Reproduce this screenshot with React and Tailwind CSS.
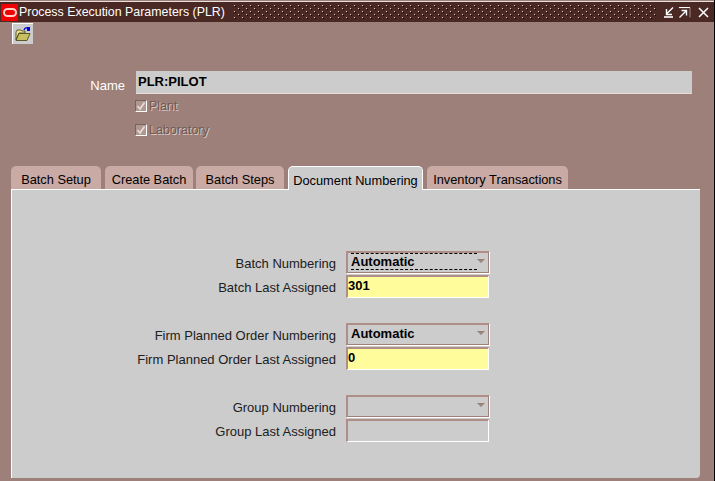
const font = { fontFamily: '"Liberation Sans", Arial, sans-serif' };

function OracleLogo() {
  return (
    <div className="flex h-[17px] w-[17px] items-center justify-center bg-[#f00000]">
      <div className="h-[9px] w-[14px] rounded-[5px] border-2 border-[#ffd0c8]" />
    </div>
  );
}

function TitleDots() {
  return (
    <svg className="h-[14px] flex-1" aria-hidden="true">
      <defs>
        <pattern id="dots" width="8" height="6" patternUnits="userSpaceOnUse">
          <rect x="1" y="0" width="1" height="1" fill="#e8c8c0" />
          <rect x="2" y="1" width="1" height="1" fill="#000000" />
          <rect x="5" y="3" width="1" height="1" fill="#e8c8c0" />
          <rect x="6" y="4" width="1" height="1" fill="#000000" />
        </pattern>
      </defs>
      <rect width="100%" height="100%" fill="url(#dots)" />
    </svg>
  );
}

function WindowButtons() {
  return (
    <div className="ml-[7px] flex items-center gap-[5px]">
      <svg width="10" height="11" viewBox="0 0 10 11" fill="none" stroke="#ffffff">
        <path d="M9 0.5 L3 6.5 M2.5 2 V7.5 H8" strokeWidth="1.4" />
        <path d="M0 10 H9" strokeWidth="1.6" />
      </svg>
      <svg width="12" height="11" viewBox="0 0 12 11" fill="none" stroke="#ffffff">
        <path d="M0 0.5 H11" strokeWidth="1.2" />
        <path d="M11 0.5 V10.5" strokeWidth="1" stroke="#a08880" />
        <path d="M0.5 10.5 L7 4 M2.5 3.5 H7.5 V8.5" strokeWidth="1.4" />
      </svg>
      <svg width="11" height="11" viewBox="0 0 11 11" fill="none" stroke="#ffffff" className="ml-[2px]">
        <path d="M1 1 L10 10 M10 1 L1 10" strokeWidth="1.5" />
      </svg>
    </div>
  );
}

function OpenIcon() {
  return (
    <svg width="16" height="16" viewBox="0 0 16 16">
      <path d="M9 4 C10 1.5 12 1.5 13 2.5" fill="none" stroke="#0000e0" strokeWidth="1.2" />
      <path d="M12 1 H15 V5 H12 Z" fill="#0000e0" />
      <path d="M1 6 L2 4 H6 L7 5 H10 V7 H4 L1 14 Z" fill="#e8e090" stroke="#403c10" strokeWidth="0.8" />
      <path d="M1 14.5 L4 7.5 H15 L12 14.5 Z" fill="#c8c060" stroke="#403c10" strokeWidth="0.8" />
    </svg>
  );
}

function Checkbox({ label }) {
  return (
    <div className="flex h-[24px] items-center">
      <div className="flex h-[12px] w-[12px] items-center justify-center border-t border-l border-[#7a625c] border-r-white border-b-white [border-right-style:solid] [border-bottom-style:solid] border-r border-b bg-[#b09890]">
        <svg width="10" height="10" viewBox="0 0 10 10" fill="none" stroke="#e8dcd8" strokeWidth="1.8">
          <path d="M1.5 5 L4 8 L8.5 1.5" />
        </svg>
      </div>
      <span className="ml-[2px] text-[12.5px] text-[#6f5a54] [text-shadow:1px_1px_0_#d8c8c4]">{label}</span>
    </div>
  );
}

function Tab({ label, active, width }) {
  if (active) {
    return (
      <div className={"relative z-10 mb-[-1px] flex h-[24px] items-center justify-center rounded-t-[5px] border-x border-t border-white bg-[#cccccc] pt-[4px] text-[12.8px] text-black " + width}>
        {label}
      </div>
    );
  }
  return (
    <div className={"flex h-[23px] items-center justify-center rounded-t-[5px] bg-[#c9aaa4] pt-[4px] text-[12.8px] text-black " + width}>
      {label}
    </div>
  );
}

function Select({ value, focused }) {
  return (
    <div className="flex h-[22px] w-[143px] items-center border-t-2 border-l-2 border-r border-b border-t-[#b08e88] border-l-[#b08e88] border-r-[#9c8079] border-b-[#9c8079] bg-[#cccccc] pr-[3px] pb-[3px] pl-[3px] shadow-[1px_1px_0_#ffffff]">
      <span className={"flex-1 text-[13px] leading-[15px] font-bold text-black " + (focused ? "border-y border-dashed border-black" : "")}>
        {value}
      </span>
      <div className="h-0 w-0 border-x-4 border-t-[4px] border-x-transparent border-t-[#9c8079]" />
    </div>
  );
}

function TextField({ value, disabled }) {
  return (
    <div
      className={
        "flex h-[23px] w-[143px] items-center border-t-2 border-l-2 border-r border-b border-t-[#b08e88] border-l-[#b08e88] border-r-white border-b-white pb-[2px] text-[13px] font-bold text-black " +
        (disabled ? "bg-[#cccccc]" : "bg-[#fffc9c]")
      }
    >
      {value}
    </div>
  );
}

function Row({ label, children }) {
  return (
    <div className="flex h-[24px] items-center">
      <div className="w-[324px] pt-[4px] text-right text-[13px] text-[#202020]">{label}</div>
      <div className="ml-[10px]">{children}</div>
    </div>
  );
}

export default function App() {
  return (
    <div style={font} className="flex h-[481px] w-[715px] flex-col overflow-hidden border-r border-black bg-[#9c8079] pt-[1px]">
      <div className="h-[1px] bg-[#e8e0dc]" />
      {/* barra de titulo */}
      <div className="flex h-[20px] items-center bg-[#4a2823] pr-[5px] pl-[1px]">
        <OracleLogo />
        <span className="ml-[1px] text-[12.4px] whitespace-nowrap text-white">Process Execution Parameters (PLR)</span>
        <div className="ml-[8px] flex flex-1 items-center">
          <TitleDots />
          <WindowButtons />
        </div>
      </div>

      <div className="pt-[1px] pl-[12px]">
        <div className="flex h-[21px] w-[21px] items-center justify-center border-t border-l border-white bg-[#cccccc]">
          <OpenIcon />
        </div>
      </div>

      <div className="mt-[27px] flex h-[23px] items-center">
        <div className="w-[125px] pt-[6px] text-right text-[13px] text-white">Name</div>
        <div className="ml-[11px] flex h-[23px] w-[556px] items-center border-r border-b border-r-[#d8c8c4] border-b-[#e8dcd8] bg-[#cccccc] pl-[2px] text-[13px] font-bold text-black">
          PLR:PILOT
        </div>
      </div>

      <div className="mt-[1px] ml-[135px]">
        <div className="-mt-[1px]"><Checkbox label="Plant" /></div>
        <Checkbox label="Laboratory" />
      </div>

      <div className="mt-[24px] flex items-end pl-[11px]">
        <Tab label="Batch Setup" width="mr-[4px] w-[90px]" />
        <Tab label="Create Batch" width="mr-[3px] w-[88px]" />
        <Tab label="Batch Steps" width="mr-[4px] w-[88px]" />
        <Tab label="Document Numbering" active width="mr-[4px] w-[135px]" />
        <Tab label="Inventory Transactions" width="w-[141px]" />
      </div>

      <div className="mr-[14px] ml-[11px] flex h-[289px] flex-col rounded-br-[4px] border-t border-l border-white bg-[#cccccc] pt-[60px]">
        <Row label="Batch Numbering"><Select value="Automatic" focused /></Row>
        <Row label="Batch Last Assigned"><TextField value="301" /></Row>
        <div className="h-[24px]" />
        <Row label="Firm Planned Order Numbering"><Select value="Automatic" /></Row>
        <Row label="Firm Planned Order Last Assigned"><TextField value="0" /></Row>
        <div className="h-[24px]" />
        <Row label="Group Numbering"><Select value="" /></Row>
        <Row label="Group Last Assigned"><TextField value="" disabled /></Row>
      </div>
    </div>
  );
}
